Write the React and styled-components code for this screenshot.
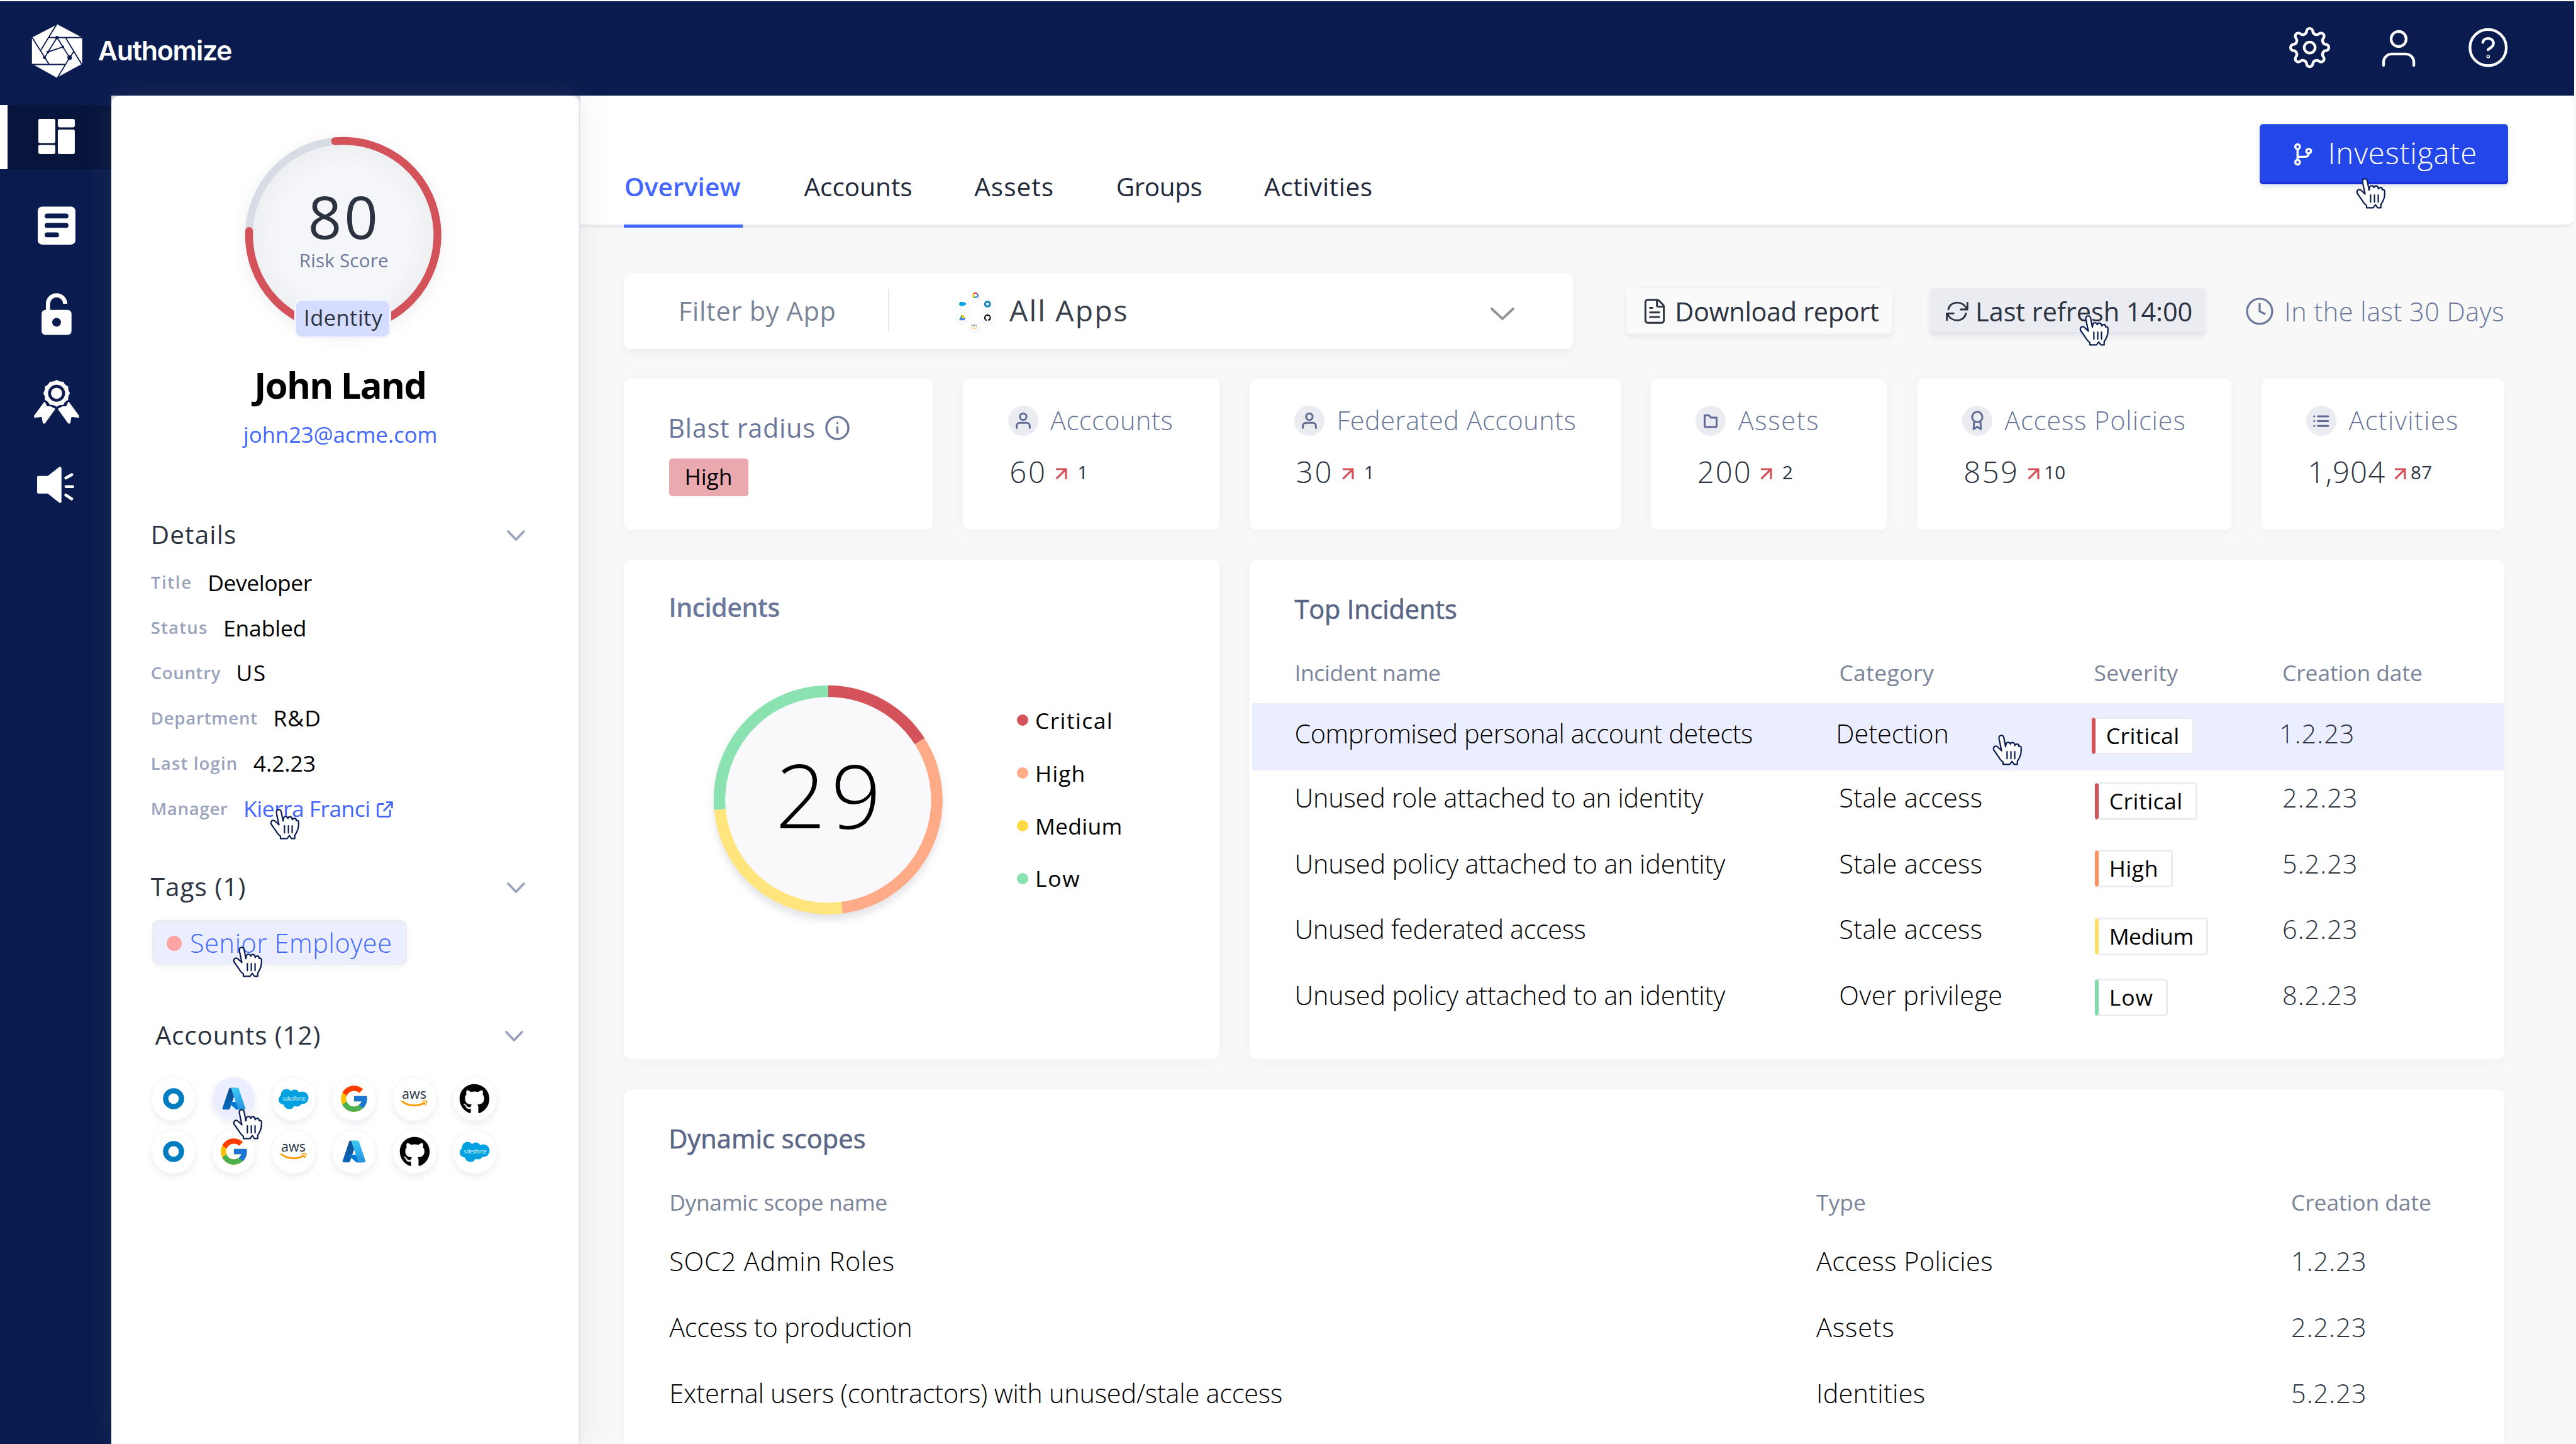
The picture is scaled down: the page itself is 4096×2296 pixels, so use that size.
import React from "react";
import styled, { createGlobalStyle, css } from "styled-components";
import { FileText, Clock } from "lucide-react";
import { FcGoogle } from "react-icons/fc";
import { FaGithub } from "react-icons/fa";

const c = {
  navy: "#0a1c4f",
  ink: "#2b3240",
  slate: "#6b789b",
  muted: "#7a8499",
  label: "#9aa3bc",
  link: "#4266ff",
  primary: "#2347e8",
  red: "#d4535b",
  orange: "#ffab87",
  yellow: "#ffe57c",
  green: "#89e2b0",
  hover: "#ebeeff",
  chip: "#ebebf2",
  canvas: "#f8f8f8",
};

const Global = createGlobalStyle`
  *, *::before, *::after { box-sizing: border-box; }
  html, body { margin: 0; background: ${c.canvas}; overflow: hidden; }
  body { font-family: "Open Sans", "Noto Sans", sans-serif; line-height: 1.224; }
  svg { display: block; overflow: visible; flex: none; }
`;

/* ---------- shell ---------- */

/* Border widths sit a hair above whole pixels so that the zoom never floors them down. */
const Page = styled.div`
  position: relative;
  width: 4101px;
  height: 2299px;
  zoom: 0.99878;
  overflow: hidden;
  display: flex;
  flex-direction: column;
  background: ${c.canvas};
  border-top: 2.01px solid #fff;
`;

const TopBar = styled.header`
  flex: none;
  display: flex;
  align-items: flex-start;
  height: 150px;
  margin-right: 3px;
  padding: 34px 97px 0 49.5px;
  background: ${c.navy};
`;

const Logo = styled.svg`
  width: 84px;
  height: 88px;
  margin-top: 1px;
`;

const Brand = styled.span`
  margin: 18px auto 0 22.5px;
  font-family: Inter, sans-serif;
  font-size: 43px;
  font-weight: 600;
  letter-spacing: -0.03em;
  color: #fff;
`;

const TopIcons = styled.div`
  display: flex;
  gap: 62.5px;
`;

const TopIcon = styled.svg`
  width: 80px;
  height: 80px;
  fill: none;
  stroke: #fff;
  stroke-width: 4.3;
  stroke-linecap: round;
  stroke-linejoin: round;
`;

const Body = styled.div`
  flex: 1;
  display: flex;
  min-height: 0;
  background: #dcdce2;
`;

const Sidebar = styled.nav`
  flex: none;
  width: 177px;
  padding-top: 15px;
  background: ${c.navy};
`;

const NavItem = styled.a`
  display: flex;
  align-items: center;
  height: 140px;
  padding-left: 50px;
  ${(p) =>
    p.$active &&
    css`
      height: 102px;
      padding-left: 38px;
      margin-bottom: 20.5px;
      border-left: 12.02px solid #fff;
      background: #07153d;
    `}
`;

const NavIcon = styled.svg`
  width: 80px;
  height: 80px;
  fill: #fff;
`;

/* ---------- identity panel ---------- */

const Panel = styled.aside`
  position: relative;
  z-index: 1;
  flex: none;
  width: 747px;
  background: #fff;
  border-right: 3.01px solid #e3e7ec;
  border-radius: 14px 14px 0 0;
  box-shadow: 0 0 50px rgba(130, 130, 130, 0.15);
`;

const Profile = styled.div`
  display: flex;
  flex-direction: column;
  align-items: center;
  width: 738px;
  padding-top: 42px;
`;

const Stack = styled.div`
  display: grid;
  width: ${(p) => p.$w}px;
  height: ${(p) => p.$h}px;
  > * {
    grid-area: 1 / 1;
  }
`;

const ScoreText = styled.div`
  z-index: 1;
  display: flex;
  flex-direction: column;
  align-items: center;
  padding-top: 104px;
`;

const Score = styled.span`
  font-size: 94px;
  line-height: 1;
  font-weight: 400;
  letter-spacing: 0.04em;
  margin-right: -0.04em;
  color: ${c.ink};
`;

const ScoreLabel = styled.span`
  margin: 5px 0 0 3px;
  font-size: 29.6px;
  letter-spacing: 0.008em;
  color: ${c.slate};
`;

const TypeBadge = styled.span`
  display: grid;
  justify-content: center;
  width: 148px;
  height: 57px;
  margin-top: 45px;
  padding: 6px 0 0 1px;
  border-radius: 9px;
  background: #d4dcff;
  box-shadow: 0 0 0 3px #f4f5ff;
  font-size: 34.5px;
  letter-spacing: 0.014em;
  color: ${c.ink};
`;

const Name = styled.h1`
  margin: 43.5px 9px 0 0;
  font-size: 58px;
  font-weight: 700;
  letter-spacing: -0.03em;
  color: #000;
`;

const Email = styled.a`
  margin: 21.5px 8px 0 0;
  font-size: 34.5px;
  letter-spacing: 0.003em;
  color: ${c.link};
`;

const SectionHead = styled.div`
  display: flex;
  justify-content: space-between;
  align-items: center;
  margin: ${(p) => p.$top}px ${(p) => 85 + (p.$shift ? 3 : 0)}px 0 ${(p) => 63 + (p.$shift || 0)}px;
  font-size: 40.5px;
  letter-spacing: ${(p) => p.$ls}em;
  color: ${c.ink};
  svg {
    margin-top: 4px;
  }
`;

const DetailList = styled.div`
  margin: 30.5px 0 0 63px;
`;

const DetailRow = styled.div`
  display: flex;
  align-items: flex-start;
  gap: 24.5px;
  height: 72px;
`;

const DetailLabel = styled.span`
  margin-top: 4.7px;
  font-size: 27.6px;
  font-weight: 600;
  letter-spacing: ${(p) => p.$ls}em;
  color: ${c.label};
`;

const DetailValue = styled.span`
  display: flex;
  gap: 10px;
  font-size: 35.5px;
  letter-spacing: ${(p) => p.$ls}em;
  color: ${(p) => (p.$link ? c.link : "#000")};
  svg {
    margin-top: 10px;
  }
`;

const Tag = styled.span`
  display: flex;
  align-items: center;
  gap: 13px;
  width: 406px;
  height: 71.5px;
  margin: 28.5px 0 0 65px;
  padding: 2px 0 0 20.5px;
  border: 3.01px solid ${c.chip};
  border-radius: 10px;
  background: ${c.hover};
  box-shadow: 0 4px 10px rgba(30, 40, 80, 0.05);
  font-size: 41.5px;
  font-weight: 300;
  letter-spacing: 0.014em;
  color: ${c.link};
`;

const Dot = styled.i`
  flex: none;
  width: ${(p) => p.$size}px;
  height: ${(p) => p.$size}px;
  border-radius: 50%;
  background: ${(p) => p.$color};
`;

const AppGrid = styled.div`
  display: grid;
  grid-template-columns: repeat(6, 68px);
  gap: 16.3px 28px;
  margin: 43px 0 0 65px;
`;

const AppBubble = styled.span`
  display: grid;
  place-items: center;
  width: 68px;
  height: 68px;
  border-radius: 50%;
  background: ${(p) => (p.$hovered ? c.hover : "#fff")};
  box-shadow: 0 0 0 2px #f8f8fb, 0 5px 12px rgba(30, 40, 80, 0.1);
`;

/* ---------- main ---------- */

const Main = styled.main`
  flex: 1;
  min-width: 0;
  background: ${c.canvas};
`;

const TabBar = styled.div`
  display: flex;
  align-items: flex-start;
  height: 210px;
  margin-right: 3px;
  padding-left: 69px;
  background: #fff;
  border-bottom: 5.01px solid #ebedf2;
  border-radius: 0 14px 14px 0;
`;

const Tab = styled.a`
  height: 210px;
  padding-top: 120px;
  margin-right: 98.7px;
  font-size: 40.5px;
  letter-spacing: ${(p) => p.$ls}em;
  color: #20283a;
  ${(p) =>
    p.$active &&
    css`
      width: 189px;
      padding-left: 1px;
      margin-right: 98px;
      border-bottom: 5.01px solid ${c.link};
      font-weight: 600;
      color: ${c.link};
    `}
`;

const InvestigateButton = styled.button`
  display: flex;
  align-items: flex-start;
  gap: 22px;
  width: 396px;
  height: 96.5px;
  margin: 45.3px 105px 0 auto;
  padding: 17px 0 0 51px;
  border: 0;
  border-radius: 6px;
  background: ${c.primary};
  box-shadow: inset 0 -4px 0 #1a2fdb, inset 0 1px 0 #5b78f0, 0 4px 8px rgba(20, 30, 80, 0.12);
  font: 300 47.4px/1.224 "Open Sans", sans-serif;
  letter-spacing: 0.019em;
  color: #fff;
  svg {
    margin-top: 11px;
  }
`;

const Content = styled.div`
  padding: 72.8px 0 0 69px;
  width: 3063px;
`;

const Row = styled.div`
  display: flex;
  align-items: center;
  gap: ${(p) => p.$gap || 0}px;
  margin-top: ${(p) => p.$top || 0}px;
`;

const Card = styled.section`
  flex: none;
  background: #fff;
  border-radius: 12px;
  box-shadow: 0 3px 18px rgba(30, 40, 70, 0.035);
`;

const FilterCard = styled(Card)`
  display: flex;
  align-items: center;
  width: 1511.5px;
  height: 120.5px;
  padding: 0 93.5px 0 87px;
  box-shadow: 0 6px 14px rgba(30, 40, 70, 0.05);
`;

const FilterLabel = styled.span`
  width: 336px;
  height: 68px;
  line-height: 70px;
  border-right: 2.01px solid #e8e8ee;
  font-size: 41.5px;
  letter-spacing: 0.017em;
  color: ${c.muted};
`;

const FilterValue = styled.span`
  display: flex;
  align-items: center;
  margin: 0 auto 0 100px;
  gap: 3px;
  line-height: 90px;
  font-size: 46.4px;
  letter-spacing: 0.046em;
  color: #383e4a;
`;

const Action = styled.span`
  display: flex;
  align-items: center;
  height: 72.5px;
  padding-top: 1.5px;
  font-size: 41.5px;
  white-space: nowrap;
  color: ${c.ink};
`;

const Download = styled(Action)`
  width: 425.6px;
  margin-left: 84.5px;
  padding-left: 23.5px;
  gap: 10px;
  border-radius: 6px;
  background: #fafafb;
  box-shadow: 0 4px 8px rgba(30, 40, 80, 0.08);
  letter-spacing: -0.008em;
`;

const Refresh = styled(Action)`
  width: 441px;
  margin-left: 60.5px;
  padding-left: 24.5px;
  gap: 11.5px;
  border-radius: 6px;
  background: ${c.chip};
  box-shadow: inset 0 -3px 0 #e4e5ef, 0 5px 9px rgba(30, 40, 80, 0.08);
  letter-spacing: -0.001em;
`;

const Range = styled(Action)`
  margin-left: 61.5px;
  gap: 15.5px;
  font-weight: 300;
  letter-spacing: 0.012em;
  color: ${c.slate};
`;

const StatGrid = styled.div`
  display: grid;
  grid-template-columns: 492px 408px 591px 376px 500px 387px;
  gap: 48px;
  margin-top: 47.7px;
`;

const StatCard = styled(Card)`
  height: 240.7px;
  padding: ${(p) => (p.$blast ? "53px 0 0 70.5px" : "41.3px 0 0 71.7px")};
`;

const StatHead = styled.div`
  display: flex;
  align-items: center;
  gap: ${(p) => (p.$blast ? 14 : 19.5)}px;
  font-size: 41.5px;
  font-weight: ${(p) => (p.$blast ? 400 : 300)};
  letter-spacing: ${(p) => p.$ls}em;
  white-space: nowrap;
  color: ${c.slate};
`;

const StatIcon = styled.svg`
  width: 48px;
  height: 48px;
  border-radius: 50%;
  background: ${c.chip};
  fill: none;
  stroke: #5f6b92;
  stroke-width: 3;
  stroke-linecap: round;
  stroke-linejoin: round;
`;

const RiskBadge = styled.span`
  display: grid;
  place-items: center;
  width: 126px;
  height: 60.5px;
  margin: 22.7px 0 0 1.5px;
  padding-bottom: 3px;
  border-radius: 5px;
  background: #e9a9ae;
  font-size: 35.5px;
  color: #000;
`;

const StatValue = styled.div`
  display: flex;
  align-items: flex-start;
  margin: 27px 0 0 2.5px;
  font-size: 47.4px;
  font-weight: 300;
  letter-spacing: ${(p) => p.$ls}em;
  color: ${c.ink};
  svg {
    margin: 22.5px 0 0 12.5px;
  }
`;

const Delta = styled.span`
  width: 49px;
  margin-top: 11.7px;
  text-align: center;
  font-size: 29.6px;
  font-weight: 400;
  letter-spacing: 0.01em;
`;

const IncidentsCard = styled(Card)`
  width: 948px;
  height: 795px;
  padding-top: 49.5px;
`;

const Title = styled.h2`
  margin: 0 0 0 ${(p) => p.$left || 71.5}px;
  font-size: 41.5px;
  font-weight: ${(p) => (p.$strong ? 600 : 400)};
  letter-spacing: ${(p) => p.$ls}em;
  color: ${(p) => (p.$strong ? c.slate : "#5a6685")};
  -webkit-text-stroke: ${(p) => (p.$strong ? 0 : 0.7)}px currentColor;
`;

const ChartRow = styled.div`
  display: flex;
  margin: 91.7px 0 0 135px;
`;

const Total = styled.span`
  z-index: 1;
  padding: 95.5px 0 0 10px;
  text-align: center;
  font-size: 140px;
  font-weight: 300;
  letter-spacing: 0.06em;
  color: #000;
`;

const Legend = styled.div`
  display: grid;
  align-content: start;
  gap: 40.6px;
  margin: 41.6px 0 0 111px;
`;

const LegendItem = styled.span`
  display: flex;
  align-items: center;
  gap: 11px;
  font-size: 35.5px;
  letter-spacing: ${(p) => p.$ls}em;
  color: #000;
`;

const TopCard = styled(Card)`
  width: 1998px;
  height: 795px;
  padding-top: 53px;
`;

const IncidentHead = styled.div`
  display: grid;
  grid-template-columns: 867px 405.5px 300px auto;
  margin: 53.6px 0 26.6px 72px;
  font-size: 35.5px;
  color: ${c.muted};
`;

const IncidentRow = styled.div`
  display: grid;
  grid-template-columns: 867px 405.5px 300px auto;
  align-items: start;
  height: 104.8px;
  margin-left: 4.5px;
  padding: 17.7px 0 0 67.5px;
  font-size: 41.5px;
  font-weight: 300;
  color: #000;
  ${(p) =>
    p.$hovered &&
    css`
      grid-template-columns: 862px 405.5px 300px auto;
      height: 108px;
      padding-top: 23.7px;
      background: ${c.hover};
    `}
`;

const Cell = styled.span`
  letter-spacing: ${(p) => p.$ls || 0}em;
  white-space: nowrap;
  ${(p) => p.$date && `color: ${c.ink};`}
`;

const Severity = styled.span`
  justify-self: start;
  height: 60px;
  margin: ${(p) => p.$drop - 1.2}px 0 0 1.3px;
  padding: 5px 20px 0 17px;
  border: 3.01px solid ${c.chip};
  border-left: 6.01px solid ${(p) => p.$color};
  border-radius: 5px;
  background: #fff;
  font-size: 35.5px;
  font-weight: 400;
  letter-spacing: ${(p) => p.$ls}em;
`;

const ScopeCard = styled(Card)`
  width: 2994px;
  height: 600px;
  margin-top: 48px;
  padding-top: 52.5px;
`;

const ScopeRow = styled.div`
  display: grid;
  grid-template-columns: 1826px 756px auto;
  height: 105px;
  margin-left: 72.5px;
  font-size: 41.5px;
  font-weight: 300;
  color: #000;
  ${(p) =>
    p.$head &&
    css`
      height: 90px;
      margin-top: 54.5px;
      font-size: 35.5px;
      font-weight: 400;
      color: ${c.muted};
    `}
`;

const Pointer = styled.svg`
  position: absolute;
  z-index: 5;
  left: ${(p) => p.$x}px;
  top: ${(p) => p.$y - 2}px;
  width: 46px;
  height: 49px;
  fill: #fff;
  stroke: ${c.navy};
  stroke-width: 2.2;
  stroke-linejoin: round;
  stroke-linecap: round;
`;

/* ---------- drawings ---------- */

const polar = (cx, cy, r, deg) => {
  const a = ((deg - 90) * Math.PI) / 180;
  return [cx + r * Math.cos(a), cy + r * Math.sin(a)];
};

const arc = (cx, cy, r, from, to) => {
  const [x1, y1] = polar(cx, cy, r, from);
  const [x2, y2] = polar(cx, cy, r, to);
  return `M${x1} ${y1}A${r} ${r} 0 ${to - from > 180 ? 1 : 0} 1 ${x2} ${y2}`;
};

const gearPath = (cx, cy) => {
  let d = "";
  for (let i = 0; i < 8; i++) {
    const [ax, ay] = polar(cx, cy, 26.8, i * 45 - 10.5);
    const [bx, by] = polar(cx, cy, 26.8, i * 45 + 10.5);
    d += i === 0 ? `M${ax} ${ay}` : `A6.1 6.1 0 0 0 ${ax} ${ay}`;
    d += `A4.95 4.95 0 0 1 ${bx} ${by}`;
  }
  const [ex, ey] = polar(cx, cy, 26.8, -10.5);
  return `${d}A6.1 6.1 0 0 0 ${ex} ${ey}Z`;
};

const scallop = (cx, cy, r) => {
  let d = "";
  for (let i = 0; i <= 12; i++) {
    const [x, y] = polar(cx, cy, r, i * 30);
    const [qx, qy] = polar(cx, cy, r * 0.86, i * 30 - 15);
    d += i === 0 ? `M${x} ${y}` : `Q${qx} ${qy} ${x} ${y}`;
  }
  return d + "Z";
};

const Chevron = ({ w = 29, h = 17, color = c.label }) => (
  <svg width={w} height={h} viewBox={`0 0 ${w} ${h}`} fill="none" stroke={color} strokeWidth="3.8" strokeLinecap="round" strokeLinejoin="round">
    <path d={`M2 2L${w / 2} ${h - 2}L${w - 2} 2`} />
  </svg>
);

const Hand = ({ x, y }) => (
  <Pointer $x={x} $y={y} viewBox="0 0 46 49">
    <path d="M16 47.4V43.8C14.4 42.6 12.8 41.2 11.4 39.2L5.6 30.6L1.4 24.8C0.4 22.6 1 20 2.8 18.8C4.6 17.8 6.4 18.6 7.8 20L13.6 25.6L9.6 6.4C9.2 3.6 10.4 1.6 12.8 1.3C15.2 1 16.6 2.4 17.2 4.8L20 19.4L21 14.4C21.6 12.8 23.4 12 25.2 12.4C26.8 12.8 27.4 14 27.8 15.2C28.4 13.4 30 12.4 31.8 12.6C33.8 13 34.6 14.6 34.8 17.4C35.6 15.6 37.2 14.8 38.8 15.2C40.4 15.6 41.2 17 41.2 19C42.6 18.4 44.6 18.6 44.8 20.6C45 25.6 44.8 30 43.4 33.4C42 37.6 40.6 39.6 38.8 42.4L38.8 47.4L33.6 47.4L30.2 42.6L26.6 47.4Z" />
    <path d="M22.4 27.2V38.4M28.6 27.2V38.4M34.6 27.2V38.4" />
  </Pointer>
);

const Arrow = () => (
  <svg width="20" height="20" viewBox="0 0 20 20" fill="none" stroke={c.red} strokeWidth="3.2">
    <path d="M2 2H18V18M17.5 2.5L2.5 17.5" />
  </svg>
);

const Okta = ({ size = 34 }) => (
  <svg width={size} height={size} viewBox="0 0 34 34">
    <circle cx="17" cy="17" r="12.6" fill="none" stroke="#007dc1" strokeWidth="8.4" />
  </svg>
);

const Azure = () => (
  <svg width="40" height="40" viewBox="0 0 96 96">
    <defs>
      <linearGradient id="azL" x1="60" y1="10" x2="20" y2="90" gradientUnits="userSpaceOnUse">
        <stop stopColor="#114a8b" />
        <stop offset="1" stopColor="#0669bc" />
      </linearGradient>
      <linearGradient id="azR" x1="46" y1="8" x2="75" y2="88" gradientUnits="userSpaceOnUse">
        <stop stopColor="#3ccbf4" />
        <stop offset="1" stopColor="#2892df" />
      </linearGradient>
    </defs>
    <path fill="url(#azL)" d="M33.338 6.544h26.038l-27.03 80.087a4.152 4.152 0 0 1-3.933 2.824H8.149a4.145 4.145 0 0 1-3.928-5.47L29.404 9.368a4.152 4.152 0 0 1 3.934-2.825z" />
    <path fill="#0078d4" d="M71.175 60.261h-41.29a1.911 1.911 0 0 0-1.305 3.309l26.532 24.764a4.171 4.171 0 0 0 2.846 1.121h23.38z" />
    <path fill="url(#azR)" d="M66.595 9.364a4.145 4.145 0 0 0-3.928-2.82H33.648a4.146 4.146 0 0 1 3.928 2.82l25.184 74.62a4.146 4.146 0 0 1-3.928 5.472h29.02a4.146 4.146 0 0 0 3.927-5.472z" />
  </svg>
);

const CloudShape = () => (
  <g fill="#00a1e0">
    <circle cx="12.5" cy="9.5" r="9" />
    <circle cx="25.5" cy="9.6" r="8" />
    <circle cx="37.6" cy="14.6" r="10" />
    <circle cx="8" cy="17.5" r="8" />
    <circle cx="17" cy="23.6" r="9" />
    <circle cx="29" cy="20" r="8.6" />
    <rect x="10" y="8" width="28" height="14" />
  </g>
);

const Salesforce = () => (
  <svg width="48" height="33" viewBox="0 0 48 33">
    <CloudShape />
    <text x="6.5" y="18.6" fill="#fff" fontSize="8.4" fontWeight="500" textLength="36" lengthAdjust="spacingAndGlyphs">salesforce</text>
  </svg>
);

const Aws = () => (
  <svg width="42" height="26" viewBox="0 0 42 26">
    <text x="1" y="13" fill="#252f3e" fontSize="22" fontWeight="500" textLength="39" lengthAdjust="spacingAndGlyphs">aws</text>
    <path d="M1.5 17.5C12 25.4 27 25.6 37 19.6" fill="none" stroke="#ff9900" strokeWidth="2.8" strokeLinecap="round" />
    <path d="M34 16.9C37 16 39.6 15.9 40.4 16.7C41 17.6 39.8 20.6 38.2 22.6" fill="none" stroke="#ff9900" strokeWidth="1.7" strokeLinecap="round" />
  </svg>
);

const logos = {
  okta: <Okta />,
  azure: <Azure />,
  salesforce: <Salesforce />,
  google: <FcGoogle size={50} />,
  aws: <Aws />,
  github: <FaGithub size={49} color="#000" />,
};

const AppCluster = () => (
  <svg width="88" height="88" viewBox="1516 451 88 88">
    <defs>
      <filter id="soft" x="-50%" y="-50%" width="200%" height="200%">
        <feDropShadow dx="0" dy="1" stdDeviation="2" floodColor="#1e2850" floodOpacity="0.1" />
      </filter>
    </defs>
    <g fill="#fff" filter="url(#soft)">
      {[[1553, 470.7], [1572.3, 484.5], [1572.3, 506.3], [1551.3, 520], [1532.3, 506.3], [1532.5, 484.5]].map(([x, y]) => (
        <circle key={`${x}${y}`} cx={x} cy={y} r="8.5" />
      ))}
    </g>
    <g fill="none" strokeWidth="2.2" strokeLinecap="round">
      <path d="M1550 468.6A3.6 3.6 0 0 1 1556 468.6" stroke="#ea4335" />
      <path d="M1550 468.8A3.2 3.2 0 0 0 1550.3 473.6" stroke="#fbbc04" />
      <path d="M1550.6 473.6H1553.4" stroke="#34a853" />
      <path d="M1553.8 473.6H1555A2.6 2.6 0 0 0 1556 468.9" stroke="#4285f4" />
    </g>
    <circle cx="1572.3" cy="484.5" r="3.9" fill="none" stroke="#007dc1" strokeWidth="2.9" />
    <svg x="1566.8" y="500.8" width="11" height="11">
      <FaGithub size={11} color="#000" />
    </svg>
    <text x="1546.2" y="520.6" fill="#252f3e" fontSize="5.8" fontWeight="600" textLength="10" lengthAdjust="spacingAndGlyphs">aws</text>
    <path d="M1547 522Q1551.5 524.2 1556.4 521.8" fill="none" stroke="#ff9900" strokeWidth="1.1" />
    <path d="M1530.6 502H1533.8L1529.6 510H1527Z" fill="#34a853" />
    <path d="M1530.6 502H1533.8L1537 507H1533.6Z" fill="#fbbc04" />
    <path d="M1529.2 507H1537L1535.4 510.4H1527.6Z" fill="#4285f4" />
    <g transform="translate(1527 480.6) scale(0.235)">
      <CloudShape />
    </g>
  </svg>
);

const person = (
  <>
    <circle cx="24" cy="17.6" r="5.2" />
    <path d="M13.6 35.5V32A5 5 0 0 1 18.6 27.4H29.4A5 5 0 0 1 34.4 32V35.5" />
  </>
);

const statIcons = {
  person,
  folder: <path d="M14.5 15.5H21.5L24.5 19H33.5V32A2 2 0 0 1 31.5 34H16.5A2 2 0 0 1 14.5 32Z" />,
  award: (
    <>
      <circle cx="24" cy="18" r="8.2" />
      <path d="M19 26L18.2 37.6L24 33.4L29.8 37.6L29 26" />
    </>
  ),
  list: <path d="M18.5 17H35M18.5 24.6H35M18.5 32.2H35M12.6 17H13M12.6 24.6H13M12.6 32.2H13" />,
};

const ring = { cx: 1318, cy: 1273.5, r: 173 };
const segments = [
  [0, 57.4, c.red],
  [57.4, 172.7, c.orange],
  [172.7, 265, c.yellow],
  [265, 360, c.green],
];

/* ---------- data ---------- */

const navCenters = [218, 359.5, 499.5, 639.5, 779.5];
const navIcons = [
  <>
    <rect x="61" y="189" width="27" height="38.5" rx="2.5" />
    <rect x="92" y="189" width="27" height="13.5" rx="2.5" />
    <rect x="61" y="230.5" width="27" height="14.5" rx="2.5" />
    <rect x="92" y="206" width="27" height="39" rx="2.5" />
  </>,
  <>
    <rect x="60" y="329" width="60" height="60.5" rx="7" />
    <path d="M75 344H105M75 359H105M75 374H90" stroke={c.navy} strokeWidth="7.8" strokeLinecap="round" />
  </>,
  <>
    <path d="M76.3 495V483.8A13.7 13.7 0 0 1 103.7 483.6" fill="none" stroke="#fff" strokeWidth="6.6" />
    <rect x="66.2" y="493.2" width="47.6" height="39.8" rx="6" />
    <circle cx="90" cy="513" r="7" fill={c.navy} />
  </>,
  <>
    <path d={scallop(90, 625.8, 21.4)} />
    <circle cx="90" cy="625.8" r="11.2" fill="none" stroke={c.navy} strokeWidth="4.6" />
    <g stroke="#fff" strokeWidth="2" strokeLinejoin="round">
      <path d="M70.9 640.5L74 647.6H80.4L86.8 651L71 673H69L67.2 662.4L55.2 663.8V662Z" />
      <path d="M109.1 640.5L106 647.6H99.6L93.2 651L109 673H111L112.8 662.4L124.8 663.8V662Z" />
    </g>
  </>,
  <>
    <path d="M61 757.2H76L93.6 743.4C95.6 742 97.8 743 97.8 745.4V798C97.8 800.4 95.4 801 93.8 799.6L76 785.4H61Q59 785.4 59 783.4V759.2Q59 757.2 61 757.2Z" />
    <path d="M104.8 760.6L114.2 755.2M105 774.3H115.8M104.8 787.6L114 793.8" stroke="#fff" strokeWidth="4.6" strokeLinecap="round" />
  </>,
];

const details = [
  ["Title", "Developer", 0.06, -0.012],
  ["Status", "Enabled", 0.042, -0.004],
  ["Country", "US", 0.024, 0.04],
  ["Department", "R&D", 0.028, 0.03],
  ["Last login", "4.2.23", 0.041, -0.003],
];

const apps = ["okta", "azure", "salesforce", "google", "aws", "github", "okta", "google", "aws", "azure", "github", "salesforce"];

const tabs = [["Accounts", 0.001], ["Assets", 0.026], ["Groups", -0.009], ["Activities", 0.015]];

const stats = [
  ["person", "Acccounts", 0.013, "60", "1", 0.06],
  ["person", "Federated Accounts", 0.012, "30", "1", 0.06],
  ["folder", "Assets", 0.04, "200", "2", 0.041],
  ["award", "Access Policies", 0.022, "859", "10", 0.05],
  ["list", "Activities", 0.033, "1,904", "87", 0.023],
];

const legend = [["Critical", c.red, 0.04], ["High", c.orange, 0.03], ["Medium", "#ffda44", 0.008], ["Low", c.green, 0.05]];

const incidents = [
  ["Compromised personal account detects", -0.011, "Detection", "Critical", c.red, 0, "1.2.23"],
  ["Unused role attached to an identity", -0.005, "Stale access", "Critical", c.red, 2, "2.2.23"],
  ["Unused policy attached to an identity", -0.004, "Stale access", "High", "#ff8f5e", 4.5, "5.2.23"],
  ["Unused federated access", -0.009, "Stale access", "Medium", "#ffe066", 8, "6.2.23"],
  ["Unused policy attached to an identity", -0.004, "Over privilege", "Low", "#7fdca8", 0, "8.2.23"],
];

const categoryLs = { Detection: -0.002, "Stale access": 0.008, "Over privilege": 0.008 };

const scopes = [
  ["SOC2 Admin Roles", 0.02, "Access Policies", 0.01, "1.2.23"],
  ["Access to production", -0.006, "Assets", 0.022, "2.2.23"],
  ["External users (contractors) with unused/stale access", -0.005, "Identities", 0.006, "5.2.23"],
];

const severityLs = { Critical: 0.015, High: 0.016, Medium: -0.014, Low: 0.03 };

const pointers = [[3752, 283], [431, 1288], [371, 1507], [371, 1765], [3310.7, 501.8], [3173, 1169]];

export default function App() {
  return (
    <>
      <Global />
      <Page>
        <TopBar>
          <Logo viewBox="49.5 37 84 88">
            <path d="M91.7 38.7L131.3 59.7V101.7L90.8 123.7L51.3 101.7V59.7Z" fill="#fff" />
            <g stroke={c.navy} strokeWidth="1.8" fill="none">
              <path d="M91 38L65 80.5M51.5 59.5L78.6 102.4M78.3 59.8H131.5M105 60.2L131 103M51.5 102.6H104.6M92 123.6L111.3 91.7L118 81.7" />
              <path d="M71.3 91.7L91.3 59.7L111.3 91.7M76.7 82.7L100.7 74.7" />
            </g>
            <g fill={c.navy}>
              <circle cx="91.3" cy="59.7" r="2.7" />
              <circle cx="100.7" cy="74.7" r="2.1" />
              <circle cx="76.7" cy="82.9" r="2.1" />
              <circle cx="71.3" cy="91.7" r="2.4" />
              <circle cx="111.3" cy="91.7" r="3.6" />
            </g>
          </Logo>
          <Brand>Authomize</Brand>
          <TopIcons>
            <TopIcon viewBox="3636 36 80 80">
              <path d={gearPath(3676.6, 75.6)} />
              <circle cx="3676.6" cy="75.6" r="8.7" />
            </TopIcon>
            <TopIcon viewBox="3779 36 80 80">
              <circle cx="3819" cy="62" r="12" />
              <path d="M3795 104V99.6A13 13 0 0 1 3808 86H3830A13 13 0 0 1 3843.2 99.6V104" />
            </TopIcon>
            <TopIcon viewBox="3921 36 80 80">
              <circle cx="3961.3" cy="75.7" r="28.9" />
              <path d="M3953 67.4C3954 59 3969.6 58.6 3969.8 69C3969.8 75.4 3962.6 77 3961.2 79" />
              <circle cx="3961.4" cy="89.8" r="0.7" />
            </TopIcon>
          </TopIcons>
        </TopBar>

        <Body>
          <Sidebar>
            {navIcons.map((icon, i) => (
              <NavItem key={navCenters[i]} $active={i === 0}>
                <NavIcon viewBox={`50 ${navCenters[i] - 40} 80 80`}>{icon}</NavIcon>
              </NavItem>
            ))}
          </Sidebar>

          <Panel>
            <Profile>
              <Stack $w={360} $h={340.5}>
                <svg width="360" height="360" viewBox="366 194 360 360" fill="none" strokeLinecap="round">
                  <defs>
                    <radialGradient id="dial">
                      <stop offset="0.72" stopColor="#f5f6f9" />
                      <stop offset="1" stopColor="#eceef0" />
                    </radialGradient>
                    <filter id="halo" x="-20%" y="-20%" width="140%" height="140%">
                      <feDropShadow dx="0" dy="6" stdDeviation="14" floodColor="#1e2840" floodOpacity="0.08" />
                    </filter>
                  </defs>
                  <circle cx="546" cy="374" r="154" fill="#fff" filter="url(#halo)" />
                  <circle cx="546" cy="374" r="150" fill="url(#dial)" stroke="#d8dce5" strokeWidth="12" />
                  <path d={arc(546, 374, 150, -5, 272.5)} stroke={c.red} strokeWidth="12.4" />
                </svg>
                <ScoreText>
                  <Score>80</Score>
                  <ScoreLabel>Risk Score</ScoreLabel>
                  <TypeBadge>Identity</TypeBadge>
                </ScoreText>
              </Stack>
              <Name>John Land</Name>
              <Email>john23@acme.com</Email>
            </Profile>

            <SectionHead $top={113} $ls={0.029}>
              Details
              <Chevron />
            </SectionHead>
            <DetailList>
              {details.map(([label, value, ls, vls]) => (
                <DetailRow key={label}>
                  <DetailLabel $ls={ls}>{label}</DetailLabel>
                  <DetailValue $ls={vls}>{value}</DetailValue>
                </DetailRow>
              ))}
              <DetailRow>
                <DetailLabel $ls={0.026}>Manager</DetailLabel>
                <DetailValue $ls={-0.015} $link>
                  Kierra Franci
                  <svg width="26" height="26" viewBox="0 0 26 26" fill="none" stroke={c.link} strokeWidth="2.8" strokeLinecap="round" strokeLinejoin="round">
                    <path d="M10.5 4.5H4Q1.6 4.5 1.6 7V22Q1.6 24.4 4 24.4H19Q21.4 24.4 21.4 22V15M16 1.6H24.4V10M24 2L11.5 15" />
                  </svg>
                </DetailValue>
              </DetailRow>
            </DetailList>

            <SectionHead $top={49} $ls={0.026}>
              Tags (1)
              <Chevron />
            </SectionHead>
            <Tag>
              <Dot $size={24} $color="#ffa3a3" />
              Senior Employee
            </Tag>

            <SectionHead $top={86.5} $ls={0.021} $shift={7}>
              Accounts (12)
              <Chevron />
            </SectionHead>
            <AppGrid>
              {apps.map((name, i) => (
                <AppBubble key={i} $hovered={i === 1}>
                  {logos[name]}
                </AppBubble>
              ))}
            </AppGrid>
          </Panel>

          <Main>
            <TabBar>
              <Tab $active $ls={0.005}>
                Overview
              </Tab>
              {tabs.map(([name, ls]) => (
                <Tab key={name} $ls={ls}>
                  {name}
                </Tab>
              ))}
              <InvestigateButton>
                <svg width="36" height="42" viewBox="3648 225 36 42" fill="none" stroke="#fff" strokeWidth="3.4">
                  <circle cx="3657.3" cy="233.2" r="3.7" />
                  <circle cx="3657.3" cy="258" r="3.7" />
                  <circle cx="3675" cy="240.3" r="3.7" />
                  <path d="M3657.3 237V254.3M3657.3 249.4H3669Q3674.6 249.4 3674.8 244" />
                </svg>
                Investigate
              </InvestigateButton>
            </TabBar>

            <Content>
              <Row>
                <FilterCard>
                  <FilterLabel>Filter by App</FilterLabel>
                  <FilterValue>
                    <AppCluster />
                    All Apps
                  </FilterValue>
                  <Row $top={10}>
                    <Chevron w={38} h={20} color="#949494" />
                  </Row>
                </FilterCard>
                <Download>
                  <FileText size={44} strokeWidth={1.6} />
                  Download report
                </Download>
                <Refresh>
                  <svg width="36" height="32" viewBox="3099 479 36 32" fill="none" stroke={c.ink} strokeWidth="2.8" strokeLinecap="round" strokeLinejoin="round">
                    <path d="M3103 492C3106 478 3126 477 3132.4 491.4M3133.4 481.4V492H3122.6" />
                    <path d="M3131 498.4C3128 512.4 3108 513.4 3101.6 499M3100.6 509V498.4H3111.4" />
                  </svg>
                  Last refresh 14:00
                </Refresh>
                <Range>
                  <Clock size={48} strokeWidth={1.6} />
                  In the last 30 Days
                </Range>
              </Row>

              <StatGrid>
                <StatCard $blast>
                  <StatHead $blast $ls={0.016}>
                    Blast radius
                    <svg width="41" height="41" viewBox="0 0 41 41" fill="none" stroke={c.slate} strokeWidth="3.4" strokeLinecap="round">
                      <circle cx="20.5" cy="20.5" r="17.6" />
                      <path d="M20.5 19.6V28.4M20.5 12.4V12.6" />
                    </svg>
                  </StatHead>
                  <RiskBadge>High</RiskBadge>
                </StatCard>
                {stats.map(([icon, name, ls, value, delta, vls]) => (
                  <StatCard key={name}>
                    <StatHead $ls={ls}>
                      <StatIcon viewBox="0 0 48 48">{statIcons[icon]}</StatIcon>
                      {name}
                    </StatHead>
                    <StatValue $ls={vls}>
                      {value}
                      <Arrow />
                      <Delta>{delta}</Delta>
                    </StatValue>
                  </StatCard>
                ))}
              </StatGrid>

              <Row $gap={48} $top={47.8}>
                <IncidentsCard>
                  <Title $strong $ls={-0.019}>
                    Incidents
                  </Title>
                  <ChartRow>
                    <Stack $w={380} $h={380}>
                      <svg width="380" height="380" viewBox="1128 1083.5 380 380" fill="none">
                        <defs>
                          <filter id="drop" x="-20%" y="-20%" width="140%" height="140%">
                            <feDropShadow dx="0" dy="9" stdDeviation="8" floodColor="#28323c" floodOpacity="0.18" />
                          </filter>
                        </defs>
                        <circle {...ring} r="178" fill="#f9f9fc" filter="url(#drop)" />
                        {segments.map(([from, to, color]) => (
                          <path key={color} d={arc(ring.cx, ring.cy, ring.r, from, to)} stroke={color} strokeWidth="18.4" />
                        ))}
                      </svg>
                      <Total>29</Total>
                    </Stack>
                    <Legend>
                      {legend.map(([name, color, ls]) => (
                        <LegendItem key={name} $ls={ls}>
                          <Dot $size={18} $color={color} />
                          {name}
                        </LegendItem>
                      ))}
                    </Legend>
                  </ChartRow>
                </IncidentsCard>

                <TopCard>
                  <Title $left={72} $ls={-0.003}>
                    Top Incidents
                  </Title>
                  <IncidentHead>
                    <Cell $ls={-0.01}>Incident name</Cell>
                    <Cell $ls={0.012}>Category</Cell>
                    <Cell $ls={0.012}>Severity</Cell>
                    <Cell $ls={-0.003}>Creation date</Cell>
                  </IncidentHead>
                  {incidents.map(([name, ls, category, severity, color, drop, date], i) => (
                    <IncidentRow key={date} $hovered={i === 0}>
                      <Cell $ls={ls}>{name}</Cell>
                      <Cell $ls={categoryLs[category]}>{category}</Cell>
                      <Severity $color={color} $drop={drop} $ls={severityLs[severity]}>
                        {severity}
                      </Severity>
                      <Cell $date $ls={0.025}>
                        {date}
                      </Cell>
                    </IncidentRow>
                  ))}
                </TopCard>
              </Row>

              <ScopeCard>
                <Title $ls={0.003}>Dynamic scopes</Title>
                <ScopeRow $head>
                  <Cell $ls={-0.01}>Dynamic scope name</Cell>
                  <Cell>Type</Cell>
                  <Cell $ls={-0.003}>Creation date</Cell>
                </ScopeRow>
                {scopes.map(([name, ls, type, typeLs, date]) => (
                  <ScopeRow key={name}>
                    <Cell $ls={ls}>{name}</Cell>
                    <Cell $ls={typeLs}>{type}</Cell>
                    <Cell $date $ls={0.025}>
                      {date}
                    </Cell>
                  </ScopeRow>
                ))}
              </ScopeCard>
            </Content>
          </Main>
        </Body>

        {pointers.map(([x, y]) => (
          <Hand key={`${x}-${y}`} x={x} y={y} />
        ))}
      </Page>
    </>
  );
}
